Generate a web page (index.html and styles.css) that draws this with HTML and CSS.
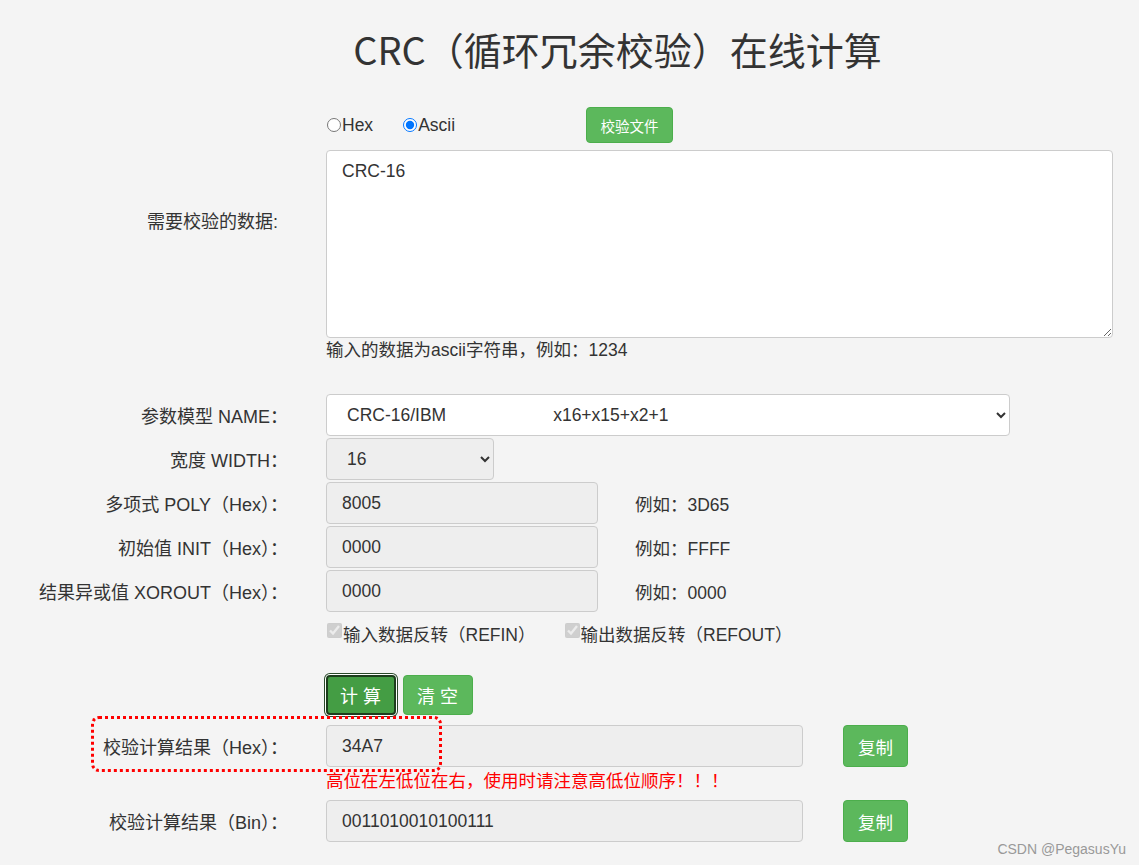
FILE: index.html
```html
<!DOCTYPE html>
<html lang="zh-CN">
<head>
  <meta charset="UTF-8">
  <title>CRC（循环冗余校验）在线计算</title>
  <link rel="stylesheet" href="styles.css">
</head>
<body>
  <h1 class="title">CRC（循环冗余校验）在线计算</h1>

  <form class="crc-form">
    <!-- 数据格式 -->
    <div class="row row-mode">
      <div class="lbl"></div>
      <div class="ctl">
        <label class="radio"><input type="radio" name="fmt">Hex</label>
        <label class="radio"><input type="radio" name="fmt" checked>Ascii</label>
        <button type="button" class="btn btn-file">校验文件</button>
      </div>
    </div>

    <div class="row row-data">
      <label class="lbl lbl-data">需要校验的数据:</label>
      <div class="ctl ctl-col">
        <textarea class="data">CRC-16</textarea>
        <div class="help">输入的数据为ascii字符串，例如：1234</div>
      </div>
    </div>

    <!-- 参数 -->
    <div class="row row-first">
      <label class="lbl">参数模型 NAME：</label>
      <div class="ctl">
        <select class="sel sel-name">
          <option>CRC-16/IBM&nbsp;&nbsp;&nbsp;&nbsp;&nbsp;&nbsp;&nbsp;&nbsp;&nbsp;&nbsp;&nbsp;&nbsp;&nbsp;&nbsp;&nbsp;&nbsp;&nbsp;&nbsp;&nbsp;&nbsp;&nbsp;&nbsp;x16+x15+x2+1</option>
        </select>
      </div>
    </div>

    <div class="row">
      <label class="lbl">宽度 WIDTH：</label>
      <div class="ctl">
        <select class="sel sel-width" disabled>
          <option>16</option>
        </select>
      </div>
    </div>

    <div class="row">
      <label class="lbl">多项式 POLY（Hex）：</label>
      <div class="ctl">
        <input class="inp inp-short" value="8005" disabled>
        <span class="eg">例如：3D65</span>
      </div>
    </div>

    <div class="row">
      <label class="lbl">初始值 INIT（Hex）：</label>
      <div class="ctl">
        <input class="inp inp-short" value="0000" disabled>
        <span class="eg">例如：FFFF</span>
      </div>
    </div>

    <div class="row">
      <label class="lbl">结果异或值 XOROUT（Hex）：</label>
      <div class="ctl">
        <input class="inp inp-short" value="0000" disabled>
        <span class="eg">例如：0000</span>
      </div>
    </div>

    <div class="row row-check">
      <div class="lbl"></div>
      <div class="ctl">
        <label class="check"><input type="checkbox" checked disabled>输入数据反转（REFIN）</label>
        <label class="check check-out"><input type="checkbox" checked disabled>输出数据反转（REFOUT）</label>
      </div>
    </div>

    <div class="row row-actions">
      <div class="lbl"></div>
      <div class="ctl">
        <button type="button" class="btn btn-big btn-active">计算</button>
        <button type="button" class="btn btn-big">清空</button>
      </div>
    </div>

    <!-- 结果 -->
    <div class="row row-result">
      <span class="mark"></span>
      <label class="lbl">校验计算结果（Hex）：</label>
      <div class="ctl">
        <input class="inp inp-long" value="34A7" disabled>
        <button type="button" class="btn btn-copy">复制</button>
      </div>
    </div>
    <div class="row row-warn">
      <div class="lbl"></div>
      <div class="ctl warn">高位在左低位在右，使用时请注意高低位顺序！！！</div>
    </div>

    <div class="row row-bin">
      <label class="lbl">校验计算结果（Bin）：</label>
      <div class="ctl">
        <input class="inp inp-long" value="0011010010100111" disabled>
        <button type="button" class="btn btn-copy">复制</button>
      </div>
    </div>
  </form>

  <div class="watermark">CSDN @PegasusYu</div>
</body>
</html>
```

FILE: styles.css
```css
body {
  margin: 0;
  background: #f4f4f4;
  color: #333;
  font-family: "Liberation Sans", "Noto Sans CJK SC", sans-serif;
  font-size: 17.5px;
  position: relative;
  height: 865px;
  overflow: hidden;
}

.title {
  margin: 21px 0 0;
  padding-left: 96px;
  text-align: center;
  font-family: "Noto Sans CJK SC", sans-serif;
  font-weight: normal;
  font-size: 38px;
  line-height: 56px;
  color: #333;
}

.crc-form {
  margin-top: 30px;
}

.row {
  display: flex;
  align-items: center;
  min-height: 42px;
  margin-bottom: 2px;
  position: relative;
}

.lbl {
  width: 288px;
  flex: none;
  text-align: right;
  margin-right: 38px;
  white-space: nowrap;
  font-size: 18px;
}

.ctl {
  display: flex;
  align-items: center;
}

.ctl-col {
  flex-direction: column;
  align-items: flex-start;
}

/* 数据格式 */
.row-mode {
  min-height: 36px;
  margin-bottom: 7px;
}

.radio {
  display: flex;
  align-items: center;
  margin-right: 29px;
}

.radio input {
  margin: 0 1px 0 1px;
  width: 14px;
  height: 14px;
}

.row-data {
  align-items: flex-start;
}

.lbl-data {
  box-sizing: border-box;
  padding-top: 57px;
  padding-right: 10px;
}

.data {
  box-sizing: border-box;
  width: 787px;
  height: 188px;
  margin: 0;
  padding: 10px 15px;
  border: 1px solid #ccc;
  border-radius: 4px;
  background: #fff;
  color: #333;
  font-family: "Liberation Sans", "Noto Sans CJK SC", sans-serif;
  font-size: 17.5px;
  line-height: 20px;
  resize: both;
}

.help {
  margin-top: 2px;
  line-height: 20px;
}

.row-first {
  margin-top: 34px;
}

/* 输入控件 */
.sel,
.inp {
  box-sizing: border-box;
  height: 42px;
  margin: 0;
  border: 1px solid #ccc;
  border-radius: 4px;
  color: #333;
  font-family: "Liberation Sans", "Noto Sans CJK SC", sans-serif;
  font-size: 17.5px;
}

.sel {
  padding: 0 10px 0 16px;
  background: #fff;
}

.sel-name {
  width: 684px;
}

.sel-width {
  width: 168px;
  background: #eee;
  opacity: 1;
}

.inp {
  padding: 0 15px;
  background: #eee;
}

.inp-short {
  width: 272px;
}

.inp-long {
  width: 477px;
}

.eg {
  margin-left: 37px;
}

.row-check {
  min-height: 38px;
}

.check {
  display: flex;
  align-items: center;
}

.check input {
  margin: -6px 1px 0 1px;
  width: 15px;
  height: 15px;
}

.check-out {
  margin-left: 28px;
}

/* 按钮 */
.btn {
  border: 1px solid #4cae4c;
  border-radius: 4px;
  background: #5cb85c;
  color: #fff;
  font-family: "Liberation Sans", "Noto Sans CJK SC", sans-serif;
  cursor: pointer;
}

.btn-file {
  width: 87px;
  height: 36px;
  margin-left: 102px;
  font-size: 14.5px;
}

.row-actions {
  margin-top: 23px;
  min-height: 40px;
}

.btn-big {
  width: 70px;
  height: 40px;
  margin-right: 7px;
  font-size: 18px;
  letter-spacing: 5px;
  padding-left: 10px;
}

.btn-active {
  background: #449d44;
  border: 2px solid #1d3d1d;
  box-shadow: 0 0 0 1px #fff, 0 0 0 2px #2a4a2a;
}

.btn-copy {
  width: 65px;
  height: 42px;
  margin-left: 40px;
  font-size: 17.5px;
}

.row-result {
  margin-top: 10px;
}

.row-warn {
  min-height: 24px;
  margin-bottom: 7px;
}

.warn {
  color: #f00;
  line-height: 24px;
}

/* 标注框 */
.mark {
  position: absolute;
  left: 91px;
  top: -9px;
  width: 345px;
  height: 50px;
  border: 3px dotted #f00;
  border-radius: 8px;
}

.watermark {
  position: absolute;
  right: 13px;
  bottom: 8px;
  color: #999;
  font-size: 14px;
}
```
